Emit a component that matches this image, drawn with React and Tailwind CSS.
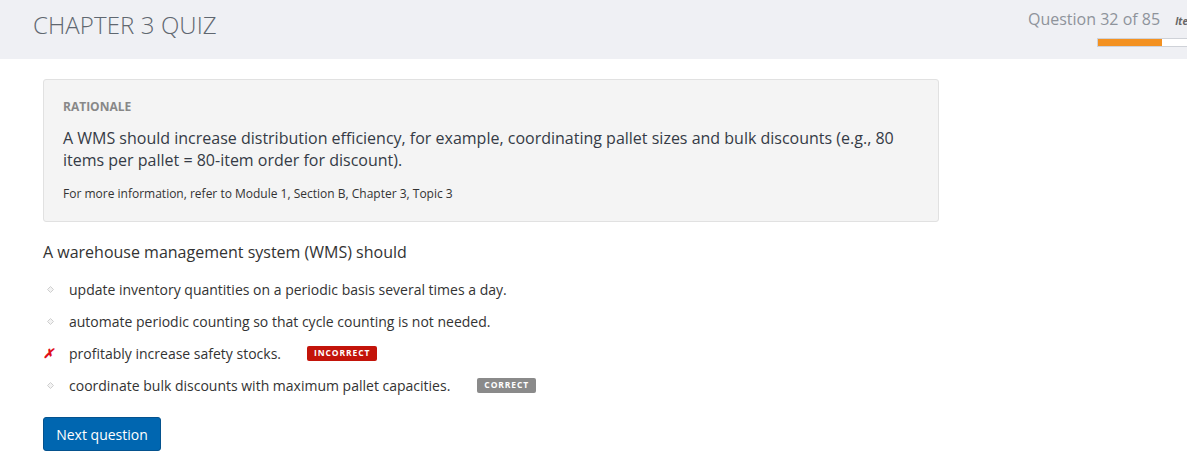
import React from 'react';

const options = [
  { text: 'update inventory quantities on a periodic basis several times a day.' },
  { text: 'automate periodic counting so that cycle counting is not needed.' },
  { text: 'profitably increase safety stocks.', badge: 'INCORRECT', wrong: true },
  { text: 'coordinate bulk discounts with maximum pallet capacities.', badge: 'CORRECT' },
];

function Bullet({ wrong }) {
  if (wrong) {
    return <span className="w-[26px] text-[#e0101a] text-[13px] font-bold italic leading-none">✗</span>;
  }
  return (
    <span className="w-[26px] flex items-center">
      <svg width="9" height="9" viewBox="0 0 9 9" className="ml-[3px]">
        <path d="M4.5 1.5 L7.5 4.5 L4.5 7.5 L1.5 4.5 Z" fill="#f3f3f3" stroke="#cfcfcf" strokeWidth="1" />
      </svg>
    </span>
  );
}

export default function App() {
  return (
    <div className="min-h-screen bg-white overflow-hidden" style={{ fontFamily: '"Open Sans", "Noto Sans", sans-serif' }}>
      <header className="h-[59px] bg-[#eff0f4] flex justify-between overflow-hidden">
        <h1 className="pl-[33px] pt-[8px] text-[24px] leading-[34px] font-light text-[#5f6770] tracking-[0.1px]">CHAPTER 3 QUIZ</h1>
        <div className="flex flex-col items-end pt-[7px] shrink-0">
          <div className="flex items-baseline gap-[15px] w-[159px]">
            <span className="text-[16px] text-[#8e939b] whitespace-nowrap">Question 32 of 85</span>
            <span className="text-[10px] font-bold italic text-[#666] whitespace-nowrap">Item</span>
          </div>
          <div className="mt-[7px] w-[90px] h-[9px] bg-white border border-[#cfd2d8] border-r-0 flex">
            <div className="w-[64px] h-full bg-[#f39121]" />
          </div>
        </div>
      </header>

      <main className="pl-[43px] pt-[20px]">
        <section className="w-[896px] bg-[#f4f4f4] border border-[#e1e1e1] rounded-[3px] px-[19px] pt-[18px] pb-[19px]">
          <h2 className="text-[12px] font-bold text-[#888] leading-[17px]">RATIONALE</h2>
          <p className="mt-[12px] text-[16px] leading-[22px] text-[#353b46]">
            A WMS should increase distribution efficiency, for example, coordinating pallet sizes and bulk discounts (e.g., 80 items per pallet = 80-item order for discount).
          </p>
          <p className="mt-[14px] text-[12px] leading-[17px] text-[#333]">
            For more information, refer to Module 1, Section B, Chapter 3, Topic 3
          </p>
        </section>

        <p className="mt-[19px] text-[16px] leading-[22px] text-[#333]">A warehouse management system (WMS) should</p>

        <ul className="mt-[10px] flex flex-col">
          {options.map((o, i) => (
            <li key={i} className="h-[32px] flex items-center text-[14px] text-[#333]">
              <Bullet wrong={o.wrong} />
              <span>{o.text}</span>
              {o.badge && (
                <span
                  className={
                    'ml-[26px] h-[15px] px-[7px] rounded-[2px] text-[8.5px] font-bold tracking-[0.9px] text-white flex items-center ' +
                    (o.wrong ? 'bg-[#c3140a]' : 'bg-[#8a8a8a] ml-[27px]')
                  }
                >
                  {o.badge}
                </span>
              )}
            </li>
          ))}
        </ul>

        <button className="mt-[16px] h-[34px] w-[118px] bg-[#0066b0] border border-[#04528e] rounded-[3px] text-white text-[14px]">
          Next question
        </button>
      </main>
    </div>
  );
}
